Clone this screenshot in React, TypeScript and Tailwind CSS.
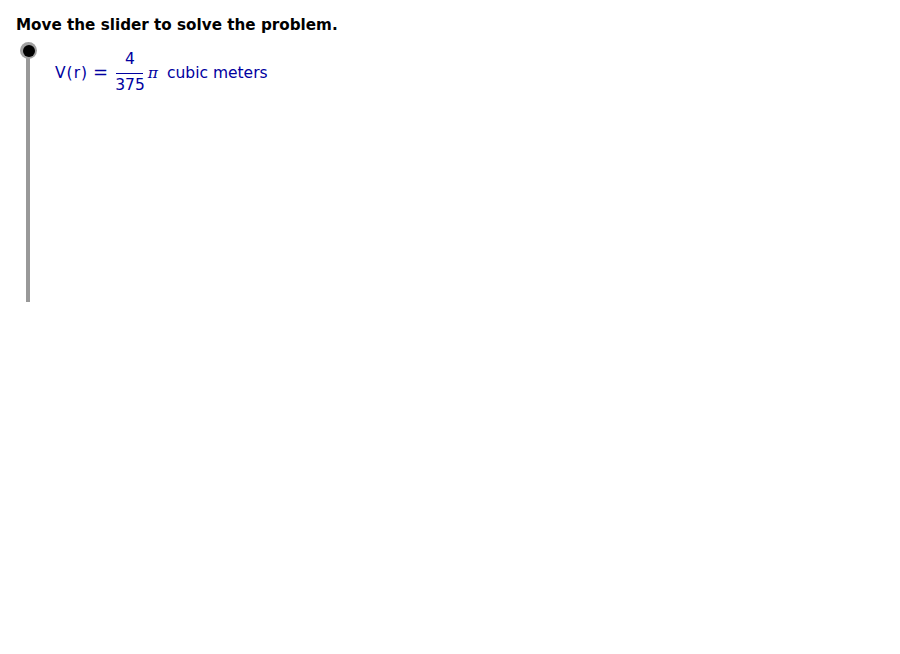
import React from "react";

export default function App() {
  return (
    <div className="w-[900px] h-[654px] bg-white overflow-hidden" style={{ fontFamily: '"DejaVu Sans", sans-serif' }}>
      <div className="pl-[16px] pt-[15px] text-[15.2px] leading-[20px] font-bold text-black">
        Move the slider to solve the problem.
      </div>
      <div className="flex items-start pl-[20px] pt-[7px]">
        <div className="relative w-[17px] h-[261px]">
          <div className="absolute left-[6px] top-[8px] w-[4px] h-[252px] bg-[#999999]" />
          <div className="absolute left-0 top-0 w-[17px] h-[17px] rounded-full bg-[#a0a0a0] flex items-center justify-center">
            <div className="w-[12px] h-[12px] rounded-full bg-black" />
          </div>
        </div>
        <div className="ml-[18px] mt-[8px] flex items-center text-[#0000a0] text-[15.5px] leading-[18px]">
          <span className="tracking-[1px] mt-[1px]">V(r)</span>
          <span className="ml-[5px] text-[18px]">=</span>
          <span className="inline-flex flex-col items-center ml-[7px] mr-[3px]">
            <span className="leading-[18px]">4</span>
            <span className="w-[27px] h-[1px] bg-[#0000a0] mt-[5px] mb-[2px]" />
            <span className="leading-[18px]">375</span>
          </span>
          <span style={{ fontFamily: '"DejaVu Serif", serif' }} className="italic mr-[9px] mt-[1px]">π</span>
          <span className="mt-[1px]">cubic meters</span>
        </div>
      </div>
    </div>
  );
}
